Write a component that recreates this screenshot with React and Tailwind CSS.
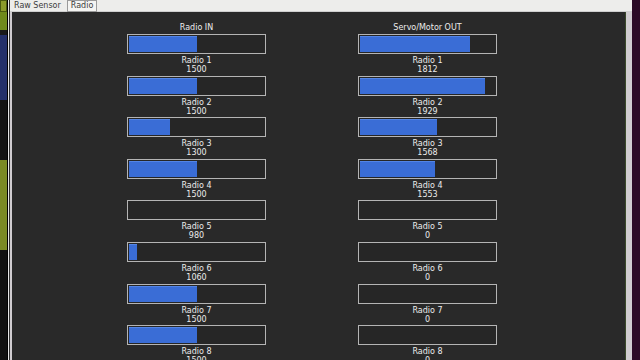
const radioIn = [1500, 1500, 1300, 1500, 980, 1060, 1500, 1500];
const servoOut = [1812, 1929, 1568, 1553, 0, 0, 0, 0];

const pct = (v) => Math.max(0, Math.min(1, (v - 1000) / 1000)) * 100;

const Bar = ({ label, value }) => (
  <div className="flex flex-col items-center h-[41.6px]">
    <div className="w-[139px] h-[20px] border border-[#b4b4b4] p-px bg-[#262626]">
      <div className="h-full bg-[#3a6dd6] border-t border-[#5284e6]" style={{ width: `${pct(value)}%` }} />
    </div>
    <div className="mt-[2px] leading-[9px]">{label}</div>
    <div className="leading-[9px]">{value}</div>
  </div>
);

const Column = ({ title, values }) => (
  <div className="flex flex-col items-center w-[139px]">
    <div className="leading-[8px] mb-[2px]">{title}</div>
    {values.map((v, i) => (
      <Bar key={i} label={`Radio ${i + 1}`} value={v} />
    ))}
  </div>
);

export default function App() {
  return (
    <div
      className="w-[640px] h-[360px] flex overflow-hidden bg-[#2b0a26]"
      style={{ fontFamily: '"DejaVu Sans", sans-serif' }}
    >
      {/* desktop strip */}
      <div className="w-[7px] flex flex-col shrink-0">
        <div className="h-[12px] bg-[#8a9a2a] border border-[#4a5a10]" />
        <div className="h-[18px] bg-[#6f8a1c]" />
        <div className="h-[5px] bg-[#1a1a1a]" />
        <div className="h-[65px] bg-[#24306a]" />
        <div className="h-[60px] bg-[#141414]" />
        <div className="h-[90px] bg-[#7a8a24]" />
        <div className="flex-1 bg-[#111]" />
      </div>
      <div className="w-px bg-black shrink-0" />
      <div className="w-px bg-[#e8e8e8] shrink-0" />
      <div className="w-px bg-[#333] shrink-0" />

      {/* window */}
      <div className="w-[622px] flex flex-col shrink-0 bg-[#d0ccd0]">
        <div className="h-[12px] bg-[#ededeb] flex items-start text-[8px] text-[#3c3c3c] border-b border-[#cfcfcf]">
          <div className="pl-[4px] pr-[6px] leading-[11px]">Raw Sensor</div>
          <div className="px-[3px] leading-[10px] border border-[#9a9a9a] bg-[#f4f4f2]">Radio</div>
        </div>
        <div className="flex-1 flex pl-[2px] pr-[6px]">
          <div className="flex-1 bg-[#292929] border-r border-[#3a4a2a] text-[8px] text-[#ececec] flex pl-[115px] gap-[92px] pt-[12px]">
            <Column title="Radio IN" values={radioIn} />
            <Column title="Servo/Motor OUT" values={servoOut} />
          </div>
        </div>
      </div>
    </div>
  );
}
